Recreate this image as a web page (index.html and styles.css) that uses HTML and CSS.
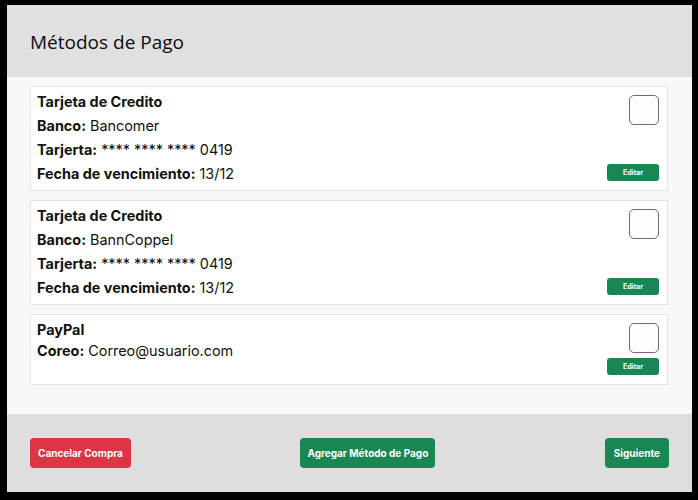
FILE: index.html
```html
<!DOCTYPE html>
<html lang="es">
<head>
<meta charset="utf-8">
<title>Métodos de Pago</title>
<link rel="stylesheet" href="styles.css">
</head>
<body>
<div class="frame">
  <div class="window">
    <header class="header">
      <h1 class="title">Métodos de Pago</h1>
    </header>
    <main class="content">
      <section class="card">
        <div class="info">
          <div class="line name">Tarjeta de Credito</div>
          <div class="line"><b>Banco:</b> Bancomer</div>
          <div class="line"><b>Tarjerta:</b> **** **** **** 0419</div>
          <div class="line"><b>Fecha de vencimiento:</b> 13/12</div>
        </div>
        <div class="side">
          <span class="check"></span>
          <button class="btn-edit">Editar</button>
        </div>
      </section>
      <section class="card">
        <div class="info">
          <div class="line name">Tarjeta de Credito</div>
          <div class="line"><b>Banco:</b> BannCoppel</div>
          <div class="line"><b>Tarjerta:</b> **** **** **** 0419</div>
          <div class="line"><b>Fecha de vencimiento:</b> 13/12</div>
        </div>
        <div class="side">
          <span class="check"></span>
          <button class="btn-edit">Editar</button>
        </div>
      </section>
      <section class="card card-compact">
        <div class="info">
          <div class="line name">PayPal</div>
          <div class="line"><b>Coreo:</b> Correo@usuario.com</div>
        </div>
        <div class="side side-compact">
          <span class="check"></span>
          <button class="btn-edit">Editar</button>
        </div>
      </section>
    </main>
    <footer class="footer">
      <button class="btn btn-red">Cancelar Compra</button>
      <button class="btn btn-green">Agregar Método de Pago</button>
      <button class="btn btn-green btn-wide">Siguiente</button>
    </footer>
  </div>
</div>
</body>
</html>
```

FILE: styles.css
```css
html, body {
  margin: 0;
  padding: 0;
  background: #000;
}
.frame {
  width: 698px;
  height: 500px;
  box-sizing: border-box;
  padding: 5px 6px 8px 7px;
  background: #000;
}
.window {
  height: 100%;
  display: flex;
  flex-direction: column;
  background: #f8f8f8;
  font-family: Inter, "Liberation Sans", sans-serif;
  color: #111;
}
.header {
  height: 72px;
  background: #e0e0e0;
  display: flex;
  align-items: center;
  padding: 0 23px;
  flex-shrink: 0;
}
.title {
  margin: 0;
  font-family: "Open Sans", "DejaVu Sans", sans-serif;
  font-weight: 400;
  font-size: 19px;
  color: #0d0d0d;
  padding-top: 1px;
}
.content {
  flex: 1;
  padding: 9px 24px 0 23px;
  display: flex;
  flex-direction: column;
  gap: 9px;
}
.card {
  background: #fff;
  border: 1px solid #e2e2e2;
  display: flex;
  justify-content: space-between;
}
.info {
  padding: 4px 6px 6px 6px;
  display: flex;
  flex-direction: column;
  gap: 3px;
  font-size: 14.4px;
}
.card-compact .info {
  gap: 0;
}
.line {
  line-height: 21px;
  white-space: nowrap;
}
.name, .line b {
  font-weight: 700;
}
.side {
  padding: 8px 8px 9px 0;
  display: flex;
  flex-direction: column;
  align-items: flex-end;
  justify-content: space-between;
}
.side-compact {
  justify-content: flex-start;
  gap: 5px;
}
.check {
  width: 28px;
  height: 28px;
  border: 1px solid #6f6f6f;
  border-radius: 5px;
  background: #fdfdfd;
}
.btn-edit {
  width: 52px;
  height: 17px;
  border: 0;
  border-radius: 3px;
  background: #198754;
  color: #fff;
  font-family: Inter, "Liberation Sans", sans-serif;
  font-weight: 700;
  font-size: 7px;
  padding: 0;
  cursor: pointer;
}
.footer {
  height: 78px;
  flex-shrink: 0;
  background: #dedede;
  display: flex;
  align-items: center;
  justify-content: space-between;
  padding: 0 23px;
  box-sizing: border-box;
}
.btn {
  height: 30px;
  border: 0;
  border-radius: 4px;
  color: #fff;
  font-family: Inter, "Liberation Sans", sans-serif;
  font-weight: 700;
  font-size: 10px;
  padding: 0 7px;
  cursor: pointer;
}
.btn-red {
  padding: 0 8px;
  background: #dc3545;
}
.btn-wide {
  padding: 0 9px;
}
.btn-green {
  background: #198754;
}
```
